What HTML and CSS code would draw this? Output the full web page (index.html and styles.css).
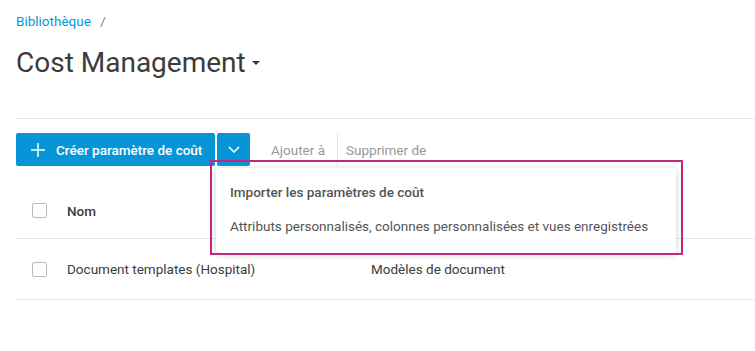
FILE: index.html
```html
<!DOCTYPE html>
<html lang="fr">
<head>
    <meta charset="UTF-8">
    <meta name="viewport" content="width=device-width, initial-scale=1.0">
    <title>Cost Management</title>
    <link rel="stylesheet" href="styles.css">
</head>
<body>
    <div class="page">
        <nav class="breadcrumb">
            <a href="#">Bibliothèque</a>
            <span class="sep">/</span>
        </nav>
        <h1 class="title">Cost Management <span class="caret"></span></h1>

        <div class="toolbar">
            <div class="split">
                <button class="btn-main">
                    <svg width="14" height="14" viewBox="0 0 14 14"><path d="M7 0v14M0 7h14" stroke="#fff" stroke-width="1.5" fill="none"/></svg>
                    Créer paramètre de coût
                </button>
                <button class="btn-arrow">
                    <svg width="12" height="7" viewBox="0 0 12 7"><path d="M1 1l5 5 5-5" stroke="#fff" stroke-width="1.5" fill="none"/></svg>
                </button>
                <div class="menu">
                    <div class="menu-item strong">Importer les paramètres de coût</div>
                    <div class="menu-item">Attributs personnalisés, colonnes personnalisées et vues enregistrées</div>
                </div>
            </div>
            <span class="action">Ajouter à</span>
            <span class="divider"></span>
            <span class="action">Supprimer de</span>
        </div>

        <div class="table">
            <div class="row head">
                <span class="check"></span>
                <span class="col-name">Nom</span>
                <span class="col-type"></span>
            </div>
            <div class="row">
                <span class="check"></span>
                <span class="col-name">Document templates (Hospital)</span>
                <span class="col-type">Modèles de document</span>
            </div>
        </div>

        <!-- cadre d'annotation -->
        <div class="highlight"></div>
    </div>
</body>
</html>
```

FILE: styles.css
```css
body {
    margin: 0;
    background: #fff;
    font-family: "Roboto", "Noto Sans", sans-serif;
    color: #3c3c3c;
}
.page {
    position: relative;
    padding: 0 0 0 16px;
}
.breadcrumb {
    padding-top: 12px;
    height: 18px;
    font-size: 13.5px;
    line-height: 18px;
}
.breadcrumb a {
    color: #0696d7;
    text-decoration: none;
}
.breadcrumb .sep {
    color: #808080;
    margin-left: 6px;
}
.title {
    margin: 16px 0 0;
    font-size: 28px;
    font-weight: 400;
    line-height: 34px;
    color: #3c3c3c;
    display: flex;
    align-items: center;
}
.caret {
    display: inline-block;
    margin-left: 6px;
    border-left: 4.5px solid transparent;
    border-right: 4.5px solid transparent;
    border-top: 4.5px solid #3c3c3c;
}
.toolbar {
    margin-top: 38px;
    border-top: 1px solid #e5e5e5;
    padding-top: 14px;
    display: flex;
    align-items: center;
    height: 33px;
}
.split {
    position: relative;
    display: flex;
    gap: 2px;
    height: 33px;
}
.split button {
    border: none;
    background: #0696d7;
    color: #fff;
    font-family: inherit;
    font-size: 13.5px;
    font-weight: 500;
    display: flex;
    align-items: center;
    border-radius: 2px;
    cursor: pointer;
}
.btn-main {
    width: 199px;
    padding: 0 0 0 15px;
    gap: 11px;
}
.btn-arrow {
    width: 33px;
    justify-content: center;
}
.action {
    font-size: 13.5px;
    color: #999;
    padding: 0 12px 0 21px;
}
.action + .divider + .action {
    padding-left: 8px;
}
.divider {
    width: 1px;
    height: 33px;
    background: #e5e5e5;
}
.menu {
    position: absolute;
    top: 35px;
    left: 200px;
    width: 460px;
    background: #fff;
    border-radius: 4px;
    box-shadow: 0 1px 6px rgba(0,0,0,0.18);
    padding: 7px 0 11px;
    z-index: 2;
}
.menu-item {
    padding: 0 14px;
    height: 34px;
    line-height: 34px;
    font-size: 13.5px;
    color: #555;
    white-space: nowrap;
}
.menu-item.strong {
    font-weight: 500;
}
.table {
    margin-top: 17px;
}
.row {
    display: flex;
    align-items: center;
    height: 60px;
    border-bottom: 1px solid #e5e5e5;
    font-size: 13.5px;
}
.row.head {
    height: 55px;
    font-weight: 500;
}
.check {
    width: 13px;
    height: 13px;
    border: 1px solid #bbb;
    border-radius: 2px;
    margin: 0 20px 0 16px;
}
.col-name {
    width: 304px;
}
.highlight {
    position: absolute;
    left: 210px;
    top: 160px;
    width: 469px;
    height: 91px;
    border: 2px solid #c2277c;
    z-index: 3;
}
```
